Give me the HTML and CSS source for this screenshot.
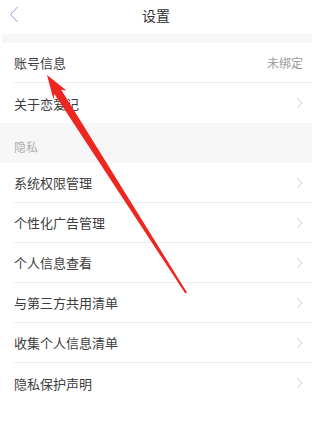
FILE: index.html
```html
<!DOCTYPE html>
<html lang="zh-CN">
<head>
  <meta charset="UTF-8">
  <title>设置</title>
  <link rel="stylesheet" href="styles.css">
</head>
<body>
  <div class="page">
    <header class="topbar">
      <svg class="back" width="10" height="17" viewBox="0 0 10 17">
        <path d="M8.5 1 L1.5 8.5 L8.5 16" fill="none" stroke="#8f9be0" stroke-width="1"/>
      </svg>
      <div class="title">设置</div>
    </header>

    <div class="gap"></div>

    <div class="row">
      <span class="label">账号信息</span>
      <span class="value">未绑定</span>
    </div>
    <div class="row">
      <span class="label">关于恋爱记</span>
      <svg class="chev" width="7" height="12" viewBox="0 0 7 12"><path d="M1 1 L6 6 L1 11" fill="none" stroke="#cfcfcf" stroke-width="1"/></svg>
    </div>

    <div class="section">隐私</div>

    <div class="row">
      <span class="label">系统权限管理</span>
      <svg class="chev" width="7" height="12" viewBox="0 0 7 12"><path d="M1 1 L6 6 L1 11" fill="none" stroke="#cfcfcf" stroke-width="1"/></svg>
    </div>
    <div class="row">
      <span class="label">个性化广告管理</span>
      <svg class="chev" width="7" height="12" viewBox="0 0 7 12"><path d="M1 1 L6 6 L1 11" fill="none" stroke="#cfcfcf" stroke-width="1"/></svg>
    </div>
    <div class="row">
      <span class="label">个人信息查看</span>
      <svg class="chev" width="7" height="12" viewBox="0 0 7 12"><path d="M1 1 L6 6 L1 11" fill="none" stroke="#cfcfcf" stroke-width="1"/></svg>
    </div>
    <div class="row">
      <span class="label">与第三方共用清单</span>
      <svg class="chev" width="7" height="12" viewBox="0 0 7 12"><path d="M1 1 L6 6 L1 11" fill="none" stroke="#cfcfcf" stroke-width="1"/></svg>
    </div>
    <div class="row">
      <span class="label">收集个人信息清单</span>
      <svg class="chev" width="7" height="12" viewBox="0 0 7 12"><path d="M1 1 L6 6 L1 11" fill="none" stroke="#cfcfcf" stroke-width="1"/></svg>
    </div>
    <div class="row">
      <span class="label">隐私保护声明</span>
      <svg class="chev" width="7" height="12" viewBox="0 0 7 12"><path d="M1 1 L6 6 L1 11" fill="none" stroke="#cfcfcf" stroke-width="1"/></svg>
    </div>

    <!-- annotation arrow drawn over the list -->
    <svg class="arrow" width="312" height="428" viewBox="0 0 312 428">
      <polygon fill="#ee2620" points="47,75 66.5,90.5 61.2,89.7 187,292.6 185.3,293.4 54.4,94.1 53.5,99.5"/>
    </svg>
  </div>
</body>
</html>
```

FILE: styles.css
```css
body {
  margin: 0;
  background: #fff;
  font-family: "Noto Sans CJK SC", "Noto Sans", sans-serif;
}
.page {
  position: relative;
  width: 312px;
  height: 428px;
  background: #fff;
}
.topbar {
  height: 34px;
  display: flex;
  align-items: center;
  justify-content: center;
  position: relative;
}
.back {
  position: absolute;
  left: 9px;
  top: 6px;
}
.title {
  font-size: 14px;
  color: #333;
  margin-top: -4px;
}
.gap {
  height: 9px;
  margin-left: 2px;
  background: #f7f7f7;
}
.row {
  height: 39px;
  margin-left: 14px;
  padding-right: 9px;
  border-bottom: 1px solid #ededed;
  display: flex;
  align-items: center;
  justify-content: space-between;
}
.row:last-child,
.row:has(+ .section),
.row:has(+ .arrow) {
  border-bottom: none;
  height: 40px;
}
.label {
  font-size: 13px;
  color: #3c3c3c;
}
.value {
  font-size: 12px;
  color: #9a9a9a;
}
.section {
  height: 40px;
  background: #f7f7f7;
  box-sizing: border-box;
  padding: 15px 0 0 14px;
  font-size: 12px;
  color: #b0b0b0;
}
.arrow {
  position: absolute;
  left: 0;
  top: 0;
  pointer-events: none;
}
```
